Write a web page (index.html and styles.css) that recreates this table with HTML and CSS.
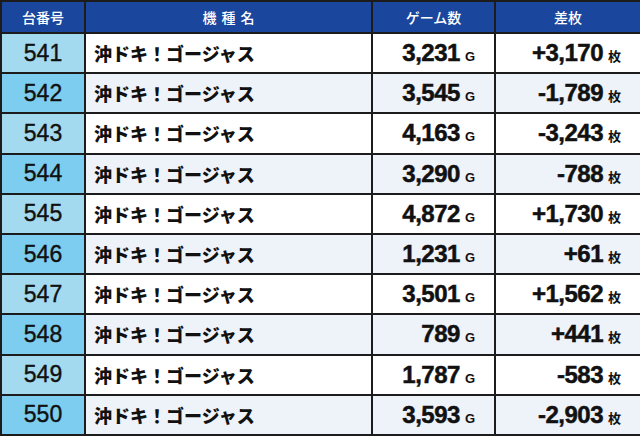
FILE: index.html
```html
<!DOCTYPE html>
<html lang="ja">
<head>
<meta charset="utf-8">
<title>台番号一覧</title>
<link rel="stylesheet" href="styles.css">
</head>
<body>
<table class="data">
  <colgroup>
    <col class="c-no"><col class="c-name"><col class="c-game"><col class="c-diff">
  </colgroup>
  <thead>
    <tr><th>台番号</th><th class="spaced">機種名</th><th>ゲーム数</th><th>差枚</th></tr>
  </thead>
  <tbody>
    <tr><td class="no">541</td><td class="name">沖ドキ！ゴージャス</td><td class="num">3,231<span class="u">G</span></td><td class="num">+3,170<span class="u">枚</span></td></tr>
    <tr><td class="no">542</td><td class="name">沖ドキ！ゴージャス</td><td class="num">3,545<span class="u">G</span></td><td class="num">-1,789<span class="u">枚</span></td></tr>
    <tr><td class="no">543</td><td class="name">沖ドキ！ゴージャス</td><td class="num">4,163<span class="u">G</span></td><td class="num">-3,243<span class="u">枚</span></td></tr>
    <tr><td class="no">544</td><td class="name">沖ドキ！ゴージャス</td><td class="num">3,290<span class="u">G</span></td><td class="num">-788<span class="u">枚</span></td></tr>
    <tr><td class="no">545</td><td class="name">沖ドキ！ゴージャス</td><td class="num">4,872<span class="u">G</span></td><td class="num">+1,730<span class="u">枚</span></td></tr>
    <tr><td class="no">546</td><td class="name">沖ドキ！ゴージャス</td><td class="num">1,231<span class="u">G</span></td><td class="num">+61<span class="u">枚</span></td></tr>
    <tr><td class="no">547</td><td class="name">沖ドキ！ゴージャス</td><td class="num">3,501<span class="u">G</span></td><td class="num">+1,562<span class="u">枚</span></td></tr>
    <tr><td class="no">548</td><td class="name">沖ドキ！ゴージャス</td><td class="num">789<span class="u">G</span></td><td class="num">+441<span class="u">枚</span></td></tr>
    <tr><td class="no">549</td><td class="name">沖ドキ！ゴージャス</td><td class="num">1,787<span class="u">G</span></td><td class="num">-583<span class="u">枚</span></td></tr>
    <tr><td class="no">550</td><td class="name">沖ドキ！ゴージャス</td><td class="num">3,593<span class="u">G</span></td><td class="num">-2,903<span class="u">枚</span></td></tr>
  </tbody>
</table>
</body>
</html>
```
FILE: styles.css
```css
html, body {
  margin: 0;
  padding: 0;
  background: #ffffff;
}
.data {
  width: 640px;
  table-layout: fixed;
  border-collapse: collapse;
  font-family: "Liberation Sans", "Noto Sans CJK JP", sans-serif;
  color: #111111;
}
.c-no { width: 84px; }
.c-name { width: 287px; }
.c-game { width: 123px; }
.c-diff { width: 146px; }
.data th, .data td {
  border: 2px solid #1c1c1c;
  padding: 0;
}
.data th {
  height: 30px;
  background: #1b469e;
  color: #ffffff;
  font-family: "Noto Sans CJK JP", sans-serif;
  font-weight: 500;
  font-size: 14px;
  text-align: center;
  vertical-align: middle;
  line-height: 1;
}
.data th.spaced {
  letter-spacing: 5px;
  text-indent: 5px;
}
.data td {
  height: 38.2px;
  vertical-align: middle;
  line-height: 1;
  background: #ffffff;
}
.data tbody tr:nth-child(even) td {
  background: #eef2f9;
}
.data td.no {
  background: #a3daef;
  text-align: center;
  font-size: 23px;
  font-weight: 400;
  -webkit-text-stroke: 0.4px #111111;
}
.data tbody tr:nth-child(even) td.no {
  background: #7ccdf0;
}
.data td.name {
  padding-left: 8px;
  font-family: "Noto Sans CJK JP", sans-serif;
  font-weight: 900;
  font-size: 18px;
}
.data td.num {
  text-align: right;
  padding-right: 19px;
  font-size: 24px;
  font-weight: 700;
  letter-spacing: -0.5px;
  -webkit-text-stroke: 0.5px #111111;
}
.u {
  display: inline-block;
  margin-left: 5px;
  font-size: 13px;
  font-weight: 700;
  letter-spacing: 0;
  -webkit-text-stroke: 0;
  font-family: "Liberation Sans", "Noto Sans CJK JP", sans-serif;
}
```
